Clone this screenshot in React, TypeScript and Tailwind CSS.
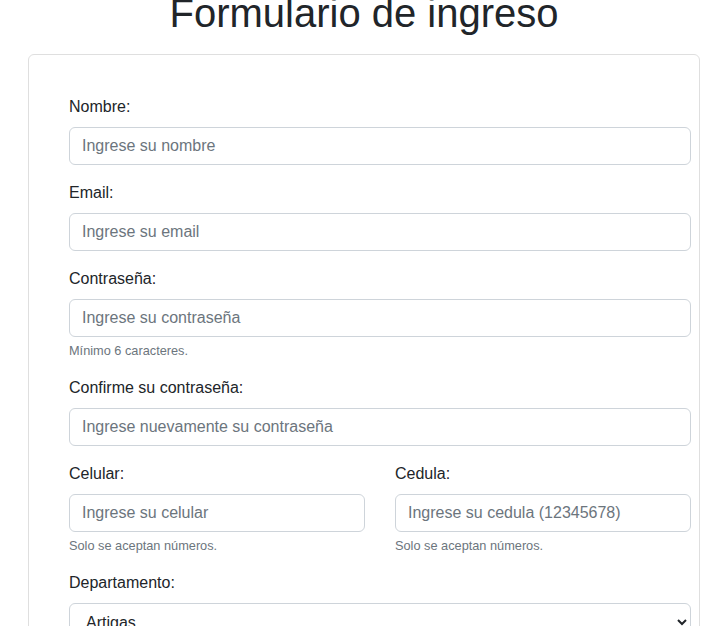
import React from 'react';

const inputCls =
  'block w-full h-[38px] px-3 rounded-md border border-[#ced4da] bg-white text-base text-[#212529] placeholder:text-[#6c757d] focus:outline-none';

function Field({ label, placeholder, help }: { label: string; placeholder: string; help?: string }) {
  return (
    <div className="mb-4">
      <label className="block mb-2 text-base leading-6 text-[#212529]">{label}</label>
      <input type="text" placeholder={placeholder} className={inputCls} />
      {help && <div className="mt-1 text-[12.75px] leading-[19px] text-[#6c757d]">{help}</div>}
    </div>
  );
}

export default function App() {
  return (
    <div className="min-h-[626px] overflow-hidden bg-white font-['Liberation_Sans',Arial,sans-serif]">
      <div className="ml-[28px] w-[672px]">
        <h1 className="-mt-[11px] mb-[17px] text-center text-[40px] leading-[48px] font-medium text-[#212529]">
          Formulario de ingreso
        </h1>

        <div className="rounded-md border border-[#dfdfdf] pt-[40px] pl-[40px] pr-[8px] pb-6">
          <form onSubmit={(e) => e.preventDefault()}>
            <Field label="Nombre:" placeholder="Ingrese su nombre" />
            <Field label="Email:" placeholder="Ingrese su email" />
            <Field label="Contraseña:" placeholder="Ingrese su contraseña" help="Mínimo 6 caracteres." />
            <Field label="Confirme su contraseña:" placeholder="Ingrese nuevamente su contraseña" />

            {/* Celular / Cedula */}
            <div className="grid grid-cols-2 gap-x-[30px]">
              <Field label="Celular:" placeholder="Ingrese su celular" help="Solo se aceptan números." />
              <Field label="Cedula:" placeholder="Ingrese su cedula (12345678)" help="Solo se aceptan números." />
            </div>

            <div className="mb-4">
              <label className="block mb-2 text-base leading-6 text-[#212529]">Departamento:</label>
              <select className="block w-full h-[38px] rounded-md border border-[#ced4da] bg-white pl-3 pr-2 text-base text-[#212529] focus:outline-none">
                <option>Artigas</option>
                <option>Canelones</option>
                <option>Montevideo</option>
              </select>
            </div>
          </form>
        </div>
      </div>
    </div>
  );
}
